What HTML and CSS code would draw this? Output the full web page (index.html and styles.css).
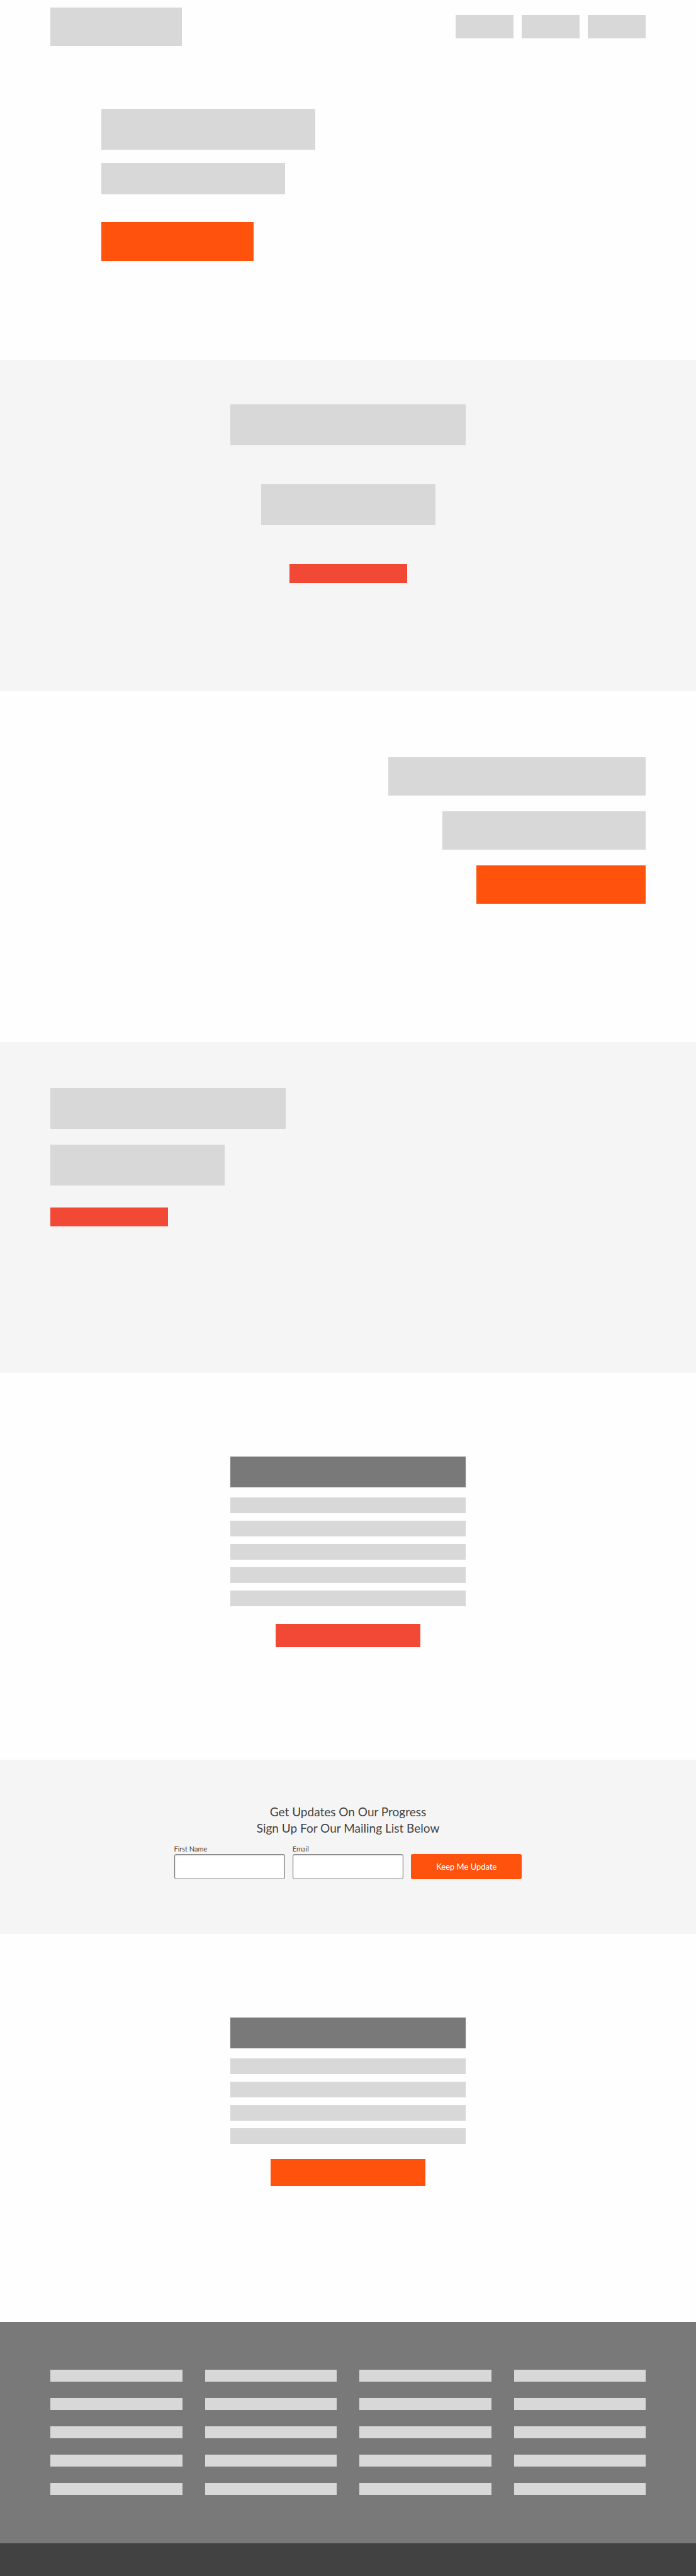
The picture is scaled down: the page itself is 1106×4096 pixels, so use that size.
FILE: index.html
```html
<!DOCTYPE html>
<html lang="en">
<head>
<meta charset="utf-8">
<meta name="viewport" content="width=device-width, initial-scale=1">
<title>Landing page wireframe</title>
<link rel="stylesheet" href="styles.css">
</head>
<body>
<header class="header">
  <a class="block logo" href="#" aria-label="Home"></a>
  <nav class="nav" aria-label="Main">
    <a class="block nav-link" href="#intro" aria-label="Intro"></a>
    <a class="block nav-link" href="#features" aria-label="Features"></a>
    <a class="block nav-link" href="#updates" aria-label="Updates"></a>
  </nav>
</header>
<main>
  <section class="section hero">
    <div class="block hero-title"></div>
    <div class="block hero-text"></div>
    <button class="cta cta-orange hero-cta" type="button" aria-label="Get started"></button>
  </section>

  <section class="section shaded intro" id="intro">
    <div class="block title"></div>
    <div class="block subtitle"></div>
    <button class="cta cta-red cta-slim" type="button" aria-label="Learn more"></button>
  </section>

  <section class="section aside-right">
    <div class="block wide-title"></div>
    <div class="block wide-text"></div>
    <button class="cta cta-orange wide-cta" type="button" aria-label="See more"></button>
  </section>

  <section class="section shaded aside-left">
    <div class="block title"></div>
    <div class="block subtitle"></div>
    <button class="cta cta-red cta-slim" type="button" aria-label="Find out more"></button>
  </section>

  <section class="section listing" id="features">
    <div class="listing-title"></div>
    <ul class="rows">
      <li class="block row"></li>
      <li class="block row"></li>
      <li class="block row"></li>
      <li class="block row"></li>
      <li class="block row"></li>
    </ul>
    <button class="cta cta-red listing-cta" type="button" aria-label="View all"></button>
  </section>

  <section class="section shaded updates" id="updates">
    <h2 class="updates-title">Get Updates On Our Progress<br>Sign Up For Our Mailing List Below</h2>
    <form class="form">
      <div class="field">
        <label class="label" for="first-name">First Name</label>
        <input class="input" id="first-name" name="first-name" type="text">
      </div>
      <div class="field">
        <label class="label" for="email">Email</label>
        <input class="input" id="email" name="email" type="email">
      </div>
      <button class="submit" type="submit">Keep Me Update</button>
    </form>
  </section>

  <section class="section listing listing-last">
    <div class="listing-title"></div>
    <ul class="rows">
      <li class="block row"></li>
      <li class="block row"></li>
      <li class="block row"></li>
      <li class="block row"></li>
    </ul>
    <button class="cta cta-orange listing-cta" type="button" aria-label="Join"></button>
  </section>
</main>
<footer>
  <div class="footer-links">
    <ul class="footer-column">
      <li class="block footer-item"></li>
      <li class="block footer-item"></li>
      <li class="block footer-item"></li>
      <li class="block footer-item"></li>
      <li class="block footer-item"></li>
    </ul>
    <ul class="footer-column">
      <li class="block footer-item"></li>
      <li class="block footer-item"></li>
      <li class="block footer-item"></li>
      <li class="block footer-item"></li>
      <li class="block footer-item"></li>
    </ul>
    <ul class="footer-column">
      <li class="block footer-item"></li>
      <li class="block footer-item"></li>
      <li class="block footer-item"></li>
      <li class="block footer-item"></li>
      <li class="block footer-item"></li>
    </ul>
    <ul class="footer-column">
      <li class="block footer-item"></li>
      <li class="block footer-item"></li>
      <li class="block footer-item"></li>
      <li class="block footer-item"></li>
      <li class="block footer-item"></li>
    </ul>
  </div>
  <div class="footer-bar"></div>
</footer>
</body>
</html>
```
FILE: styles.css
```css
:root {
  --grey: #d8d8d8;
  --grey-dark: #797979;
  --shade: #f5f5f5;
  --orange: #ff530d;
  --red: #f24937;
  --ink: #424242;
  --gutter: 80px;
}

* {
  box-sizing: border-box;
}

body {
  margin: 0;
  background: #fefefe;
  color: var(--ink);
  font-family: Lato, "Open Sans", sans-serif;
}

ul {
  margin: 0;
  padding: 0;
  list-style: none;
}

.block {
  display: block;
  max-width: 100%;
  background: var(--grey);
}

.header {
  display: flex;
  align-items: center;
  justify-content: space-between;
  padding: 12px var(--gutter);
}

.logo {
  width: 209px;
  height: 61px;
}

.nav {
  display: flex;
  gap: 13px;
}

.nav-link {
  width: 92px;
  height: 37px;
}

.section {
  display: flex;
  flex-direction: column;
  align-items: center;
  padding: 0 var(--gutter);
}

.shaded {
  background: var(--shade);
}

.cta {
  max-width: 100%;
  padding: 0;
  border: 0;
  cursor: pointer;
}

.cta-orange {
  background: var(--orange);
}

.cta-red {
  background: var(--red);
}

.cta-slim {
  width: 187px;
  height: 30px;
}

.title {
  width: 374px;
  height: 65px;
}

.subtitle {
  width: 277px;
  height: 65px;
}

/* Hero */
.hero {
  align-items: flex-start;
  padding: 88px 161px 157px;
}

.hero-title {
  width: 340px;
  height: 65px;
}

.hero-text {
  width: 292px;
  height: 50px;
  margin-top: 21px;
}

.hero-cta {
  width: 242px;
  height: 62px;
  margin-top: 44px;
}

/* Centred intro */
.intro {
  gap: 62px;
  padding-top: 71px;
  padding-bottom: 172px;
}

/* Right-aligned blocks */
.aside-right {
  align-items: flex-end;
  gap: 25px;
  padding-top: 105px;
  padding-bottom: 220px;
}

.wide-title {
  width: 409px;
  height: 61px;
}

.wide-text {
  width: 323px;
  height: 61px;
}

.wide-cta {
  width: 269px;
  height: 61px;
}

/* Left-aligned blocks */
.aside-left {
  align-items: flex-start;
  padding-top: 73px;
  padding-bottom: 233px;
}

.aside-left .subtitle {
  margin-top: 25px;
}

.aside-left .cta {
  margin-top: 35px;
}

/* Title over stacked rows */
.listing {
  padding-top: 133px;
  padding-bottom: 179px;
}

.listing-title {
  width: 374px;
  max-width: 100%;
  height: 49px;
  background: var(--grey-dark);
}

.rows {
  display: flex;
  flex-direction: column;
  gap: 12px;
  width: 374px;
  max-width: 100%;
  margin-top: 16px;
}

.row {
  height: 25px;
}

.listing-cta {
  width: 230px;
  height: 37px;
  margin-top: 28px;
}

.listing-last {
  padding-bottom: 216px;
}

.listing-last .listing-cta {
  width: 246px;
  height: 43px;
  margin-top: 24px;
}

/* Mailing list */
.updates {
  padding-top: 70px;
  padding-bottom: 87px;
}

.updates-title {
  margin: 0;
  font-size: 19px;
  font-weight: 400;
  line-height: 26px;
  text-align: center;
}

.form {
  display: flex;
  align-items: flex-end;
  gap: 12px;
  width: 553px;
  max-width: 100%;
  margin-top: 14px;
}

.field {
  display: flex;
  flex: 1;
  flex-direction: column;
  gap: 2px;
  min-width: 0;
}

.label {
  font-size: 11px;
  line-height: 12px;
}

.input {
  width: 100%;
  height: 40px;
  padding: 0 8px;
  border: 1px solid #797979;
  border-radius: 3px;
  background: #fff;
  box-shadow: inset 0 1px 2px rgba(0, 0, 0, 0.3);
  color: var(--ink);
  font: inherit;
  font-size: 13px;
}

.submit {
  flex: 1;
  height: 40px;
  padding: 0;
  border: 0;
  border-radius: 3px;
  background: var(--orange);
  color: #fff;
  font: inherit;
  font-size: 13px;
  cursor: pointer;
}

/* Footer */
.footer-links {
  display: grid;
  grid-template-columns: repeat(4, 1fr);
  gap: 36px;
  padding: 76px var(--gutter) 77px;
  background: var(--grey-dark);
}

.footer-column {
  display: flex;
  flex-direction: column;
  gap: 26px;
}

.footer-item {
  height: 19px;
}

.footer-bar {
  height: 52px;
  background: var(--ink);
}
```
